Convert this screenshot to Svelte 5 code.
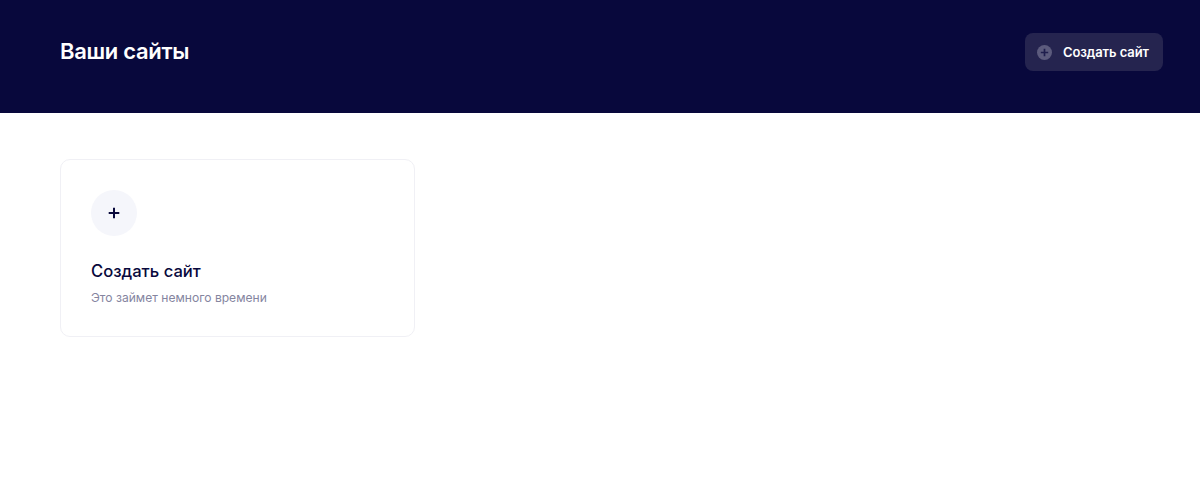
<script>
  const title = 'Ваши сайты';
  const action = 'Создать сайт';
  const hint = 'Это займет немного времени';
</script>

<header class="top">
  <h1>{title}</h1>
  <button class="create" type="button">
    <svg class="plus-badge" width="15" height="15" viewBox="0 0 15 15" aria-hidden="true">
      <circle cx="7.5" cy="7.5" r="7.5" fill="#5c5b7d" />
      <path d="M7.5 3.8v7.4M3.8 7.5h7.4" stroke="#1f1e4d" stroke-width="1.7" fill="none" />
    </svg>
    <span>{action}</span>
  </button>
</header>

<main class="content">
  <article class="card">
    <div class="circle">
      <svg width="12" height="12" viewBox="0 0 12 12" aria-hidden="true">
        <path d="M6 .7v10.6M.7 6h10.6" stroke="#0a0a3c" stroke-width="2" fill="none" />
      </svg>
    </div>
    <h2>{action}</h2>
    <p>{hint}</p>
  </article>
</main>

<style>
  :global(body) {
    margin: 0;
    background: #fff;
    font-family: Inter, "Noto Sans", sans-serif;
  }
  .top {
    box-sizing: border-box;
    height: 113px;
    padding: 33px 37px 42px 60px;
    background: #08083c;
    display: flex;
    justify-content: space-between;
    align-items: flex-start;
  }
  h1 {
    margin: 0;
    padding-top: 3px;
    color: #fff;
    font-size: 22px;
    line-height: 30px;
    font-weight: 600;
    letter-spacing: -0.3px;
  }
  .create {
    box-sizing: border-box;
    width: 138px;
    height: 38px;
    padding: 0 0 0 12px;
    border: 0;
    border-radius: 8px;
    background: #25244f;
    color: #fff;
    font: 600 13px/18px Inter, "Noto Sans", sans-serif;
    letter-spacing: -0.1px;
    display: flex;
    align-items: center;
    gap: 11px;
  }
  .plus-badge { flex: none; }
  .content { padding: 46px 60px 0; }
  .card {
    box-sizing: border-box;
    width: 355px;
    height: 178px;
    padding: 30px;
    border: 1px solid #f0f0f5;
    border-radius: 10px;
  }
  .circle {
    width: 46px;
    height: 46px;
    border-radius: 50%;
    background: #f5f6fb;
    display: flex;
    align-items: center;
    justify-content: center;
  }
  h2 {
    margin: 23px 0 0;
    color: #08083c;
    font-size: 16.6px;
    line-height: 24px;
    font-weight: 500;
  }
  p {
    margin: 6px 0 0;
    color: #85859f;
    font-size: 12.1px;
    line-height: 18px;
  }
</style>
